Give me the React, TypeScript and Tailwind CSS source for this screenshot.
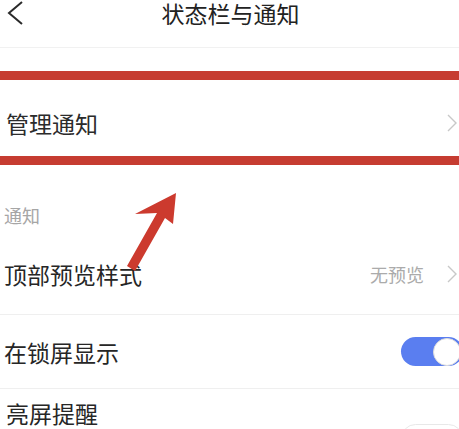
import React from "react";

const font = { fontFamily: '"Noto Sans CJK SC", "Noto Sans", sans-serif' };

function ChevronRight() {
  return (
    <svg width="12" height="20" viewBox="0 0 12 20" className="shrink-0">
      <polyline points="2,2 10,10 2,18" fill="none" stroke="#c8c8c8" strokeWidth="1.4" strokeLinejoin="miter" />
    </svg>
  );
}

export default function App() {
  return (
    <div className="relative w-full h-[429px] overflow-hidden bg-white text-[#262626]" style={font}>
      {/* Header */}
      <div className="relative flex items-start justify-center h-[48px] pt-[1px] border-b border-[#f1f1f1]">
        <svg width="20" height="26" viewBox="0 0 20 26" className="absolute left-[5px] top-[0px]">
          <polyline points="17,2 4,13 17,24" fill="none" stroke="#2a2a2a" strokeWidth="2" />
        </svg>
        <span className="text-[23px] leading-[25px] text-[#222] ml-[2px]">状态栏与通知</span>
      </div>

      {/* spacer */}
      <div className="h-[23px]" />

      {/* Highlighted row */}
      <div className="flex items-center justify-between h-[94px] border-y-[9px] border-[#c63c31] pt-[9px] pl-[6px] pr-[1px]">
        <span className="text-[23px] leading-[26px] text-[#2b2b2b]">管理通知</span>
        <ChevronRight />
      </div>

      {/* Section header */}
      <div className="h-[68px] pt-[40px] pl-[4px]">
        <span className="block text-[18px] leading-[20px] text-[#a6a6a6]">通知</span>
      </div>

      {/* Top preview style */}
      <div className="flex items-center justify-between h-[82px] border-b border-[#efefef] pl-[4px] pr-[1px]">
        <span className="text-[23px] leading-[26px]">顶部预览样式</span>
        <div className="flex items-center gap-[22px]">
          <span className="text-[18px] leading-[20px] text-[#ababab]">无预览</span>
          <ChevronRight />
        </div>
      </div>

      {/* Lock screen */}
      <div className="flex items-center justify-between h-[74px] border-b border-[#efefef] pl-[4px]">
        <span className="text-[23px] leading-[26px]">在锁屏显示</span>
        <div className="relative w-[62px] h-[29px] mr-[-4px] rounded-full bg-[#5a7ef0]">
          <div className="absolute right-[2px] top-[0.5px] w-[28px] h-[28px] rounded-full bg-white border border-[#dcdcdc]" />
        </div>
      </div>

      {/* Bright screen */}
      <div className="flex items-start justify-between h-[74px] pl-[6px]">
        <span className="mt-[11px] text-[23px] leading-[26px]">亮屏提醒</span>
        <div className="mt-[35px] w-[62px] h-[29px] mr-[-4px] rounded-full border border-[#e8e8e8] bg-white" />
      </div>

      {/* Red annotation arrow */}
      <svg className="absolute left-0 top-0 pointer-events-none" width="459" height="429" viewBox="0 0 459 429">
        <polygon
          points="176,193 173,224 165,218 135,271 127,266 157,213 135,214"
          fill="#cc3a2e"
        />
      </svg>
    </div>
  );
}
